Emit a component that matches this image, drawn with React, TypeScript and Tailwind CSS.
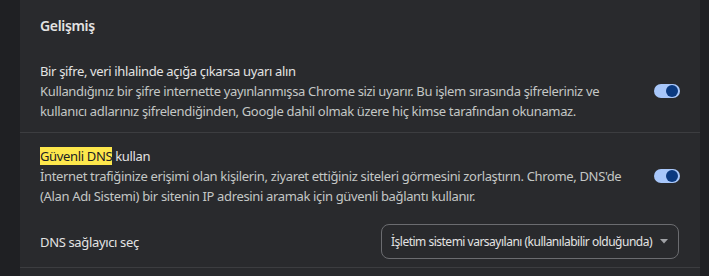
import React from "react";

function Toggle() {
  return (
    <div className="relative h-[14px] w-[26px] shrink-0 rounded-full bg-[#a8c7fa]">
      <div className="absolute right-[2px] top-[1px] h-[12px] w-[12px] rounded-full bg-[#0b3a80]" />
    </div>
  );
}

export default function App() {
  return (
    <div
      className="flex h-[276px] w-[709px] bg-[#1f2023] text-[13px] leading-[20px] tracking-[-0.35px] text-[#c4c7c5]"
      style={{ fontFamily: '"Noto Sans", "Open Sans", sans-serif' }}
    >
      <div className="w-[20px] shrink-0" />
      <div className="flex w-[680px] flex-col bg-[#292a2d]">
        <div className="flex h-[50px] items-center px-[20px] pt-[2px] text-[14px] font-semibold text-[#e3e3e3]">
          Gelişmiş
        </div>
        <div className="flex items-center gap-[20px] border-b border-[#3c3d40] px-[20px] pb-[11px] pt-[11px]">
          <div className="flex-1">
            <div className="text-[#e3e3e3]">Bir şifre, veri ihlalinde açığa çıkarsa uyarı alın</div>
            <div>
              Kullandığınız bir şifre internette yayınlanmışsa Chrome sizi uyarır. Bu işlem sırasında şifreleriniz ve
              kullanıcı adlarınız şifrelendiğinden, Google dahil olmak üzere hiç kimse tarafından okunamaz.
            </div>
          </div>
          <Toggle />
        </div>
        <div className="flex items-center gap-[20px] px-[20px] pb-[10px] pt-[13px]">
          <div className="flex-1">
            <div className="text-[#e3e3e3]">
              <span className="bg-[#fde74c] text-[#202124]">Güvenli DNS</span> kullan
            </div>
            <div>
              İnternet trafiğinize erişimi olan kişilerin, ziyaret ettiğiniz siteleri görmesini zorlaştırın. Chrome, DNS'de
              (Alan Adı Sistemi) bir sitenin IP adresini aramak için güvenli bağlantı kullanır.
            </div>
          </div>
          <Toggle />
        </div>
        <div className="flex items-center justify-between border-b border-[#3c3d40] px-[20px] pb-[8px] pt-[8px]">
          <div className="text-[#e3e3e3]">DNS sağlayıcı seç</div>
          <div className="mr-[1px] flex h-[35px] w-[298px] items-center justify-between whitespace-nowrap rounded-[8px] border border-[#6b6c70] pl-[9px] pr-[10px] text-[12px] tracking-[-0.5px] text-[#e3e3e3]">
            <span>İşletim sistemi varsayılanı (kullanılabilir olduğunda)</span>
            <svg className="shrink-0" width="8" height="5" viewBox="0 0 8 5">
              <path d="M0 0 L8 0 L4 4.5 Z" fill="#a0a2a6" />
            </svg>
          </div>
        </div>
        <div className="flex-1" />
      </div>
      <div className="flex-1" />
    </div>
  );
}
